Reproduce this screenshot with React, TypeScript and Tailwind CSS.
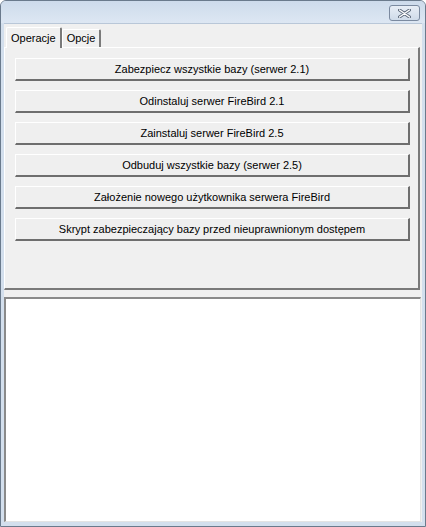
import React from "react";

const buttons = [
  "Zabezpiecz wszystkie bazy (serwer 2.1)",
  "Odinstaluj serwer FireBird 2.1",
  "Zainstaluj serwer FireBird 2.5",
  "Odbuduj wszystkie bazy (serwer 2.5)",
  "Założenie nowego użytkownika serwera FireBird",
  "Skrypt zabezpieczający bazy przed nieuprawnionym dostępem",
];

export default function App() {
  return (
    <div
      className="w-[426px] h-[527px] bg-[#d3dfed] border border-[#6a7a8c] rounded-t-[6px] flex flex-col text-[11px] text-black overflow-hidden"
      style={{ fontFamily: '"Liberation Sans", Arial, sans-serif' }}
    >
      {/* title bar */}
      <div className="h-[22px] shrink-0 flex justify-end items-start pr-[5px] pt-[4px] bg-gradient-to-b from-[#cddbeb] to-[#dde7f3]">
        <div className="w-[31px] h-[16px] rounded-[3px] border border-[#7b8aa0] bg-gradient-to-b from-[#e8eef6] to-[#cfdbe9] flex items-center justify-center">
          <svg width="13" height="9" viewBox="0 0 13 9">
            <path d="M1.5 1 L11.5 8 M11.5 1 L1.5 8" stroke="#5e6b7c" strokeWidth="3.2" strokeLinecap="round" />
            <path d="M1.5 1 L11.5 8 M11.5 1 L1.5 8" stroke="#ffffff" strokeWidth="1.4" strokeLinecap="round" />
          </svg>
        </div>
      </div>
      {/* client */}
      <div className="flex-1 mx-[3px] mb-[4px] bg-[#f0f0f0] border-t border-[#b9c7d8] flex flex-col">
        {/* tabs */}
        <div className="flex items-end pl-[2px] pt-[2px] h-[23px] shrink-0">
          <div className="h-[21px] px-[4px] bg-[#f0f0f0] border-t border-l border-white border-r-2 border-r-[#7a7a7a] rounded-t-[2px] flex items-center relative z-10 -mb-px">
            Operacje
          </div>
          <div className="h-[18px] px-[4px] bg-[#f0f0f0] border-t border-l border-white border-r-2 border-r-[#7a7a7a] rounded-t-[2px] flex items-center">
            Opcje
          </div>
        </div>
        {/* panel */}
        <div className="h-[243px] shrink-0 mr-[2px] border-t border-l border-white border-r-2 border-b-2 border-r-[#7a7a7a] border-b-[#7a7a7a] flex flex-col gap-[9px] pt-[10px] pl-[10px] pr-[8px]">
          {buttons.map((b) => (
            <div
              key={b}
              className="h-[23px] border-t border-l border-white border-r-2 border-b-2 border-r-[#6e6e6e] border-b-[#6e6e6e] bg-[#efefef] flex items-center justify-center"
            >
              {b}
            </div>
          ))}
        </div>
        {/* text area */}
        <div className="flex-1 mt-[7px] mr-[1px] bg-white border-t-2 border-l-2 border-t-[#8a8a8a] border-l-[#8a8a8a] border-r border-b border-r-[#e3e3e3] border-b-[#e3e3e3]" />
      </div>
    </div>
  );
}
